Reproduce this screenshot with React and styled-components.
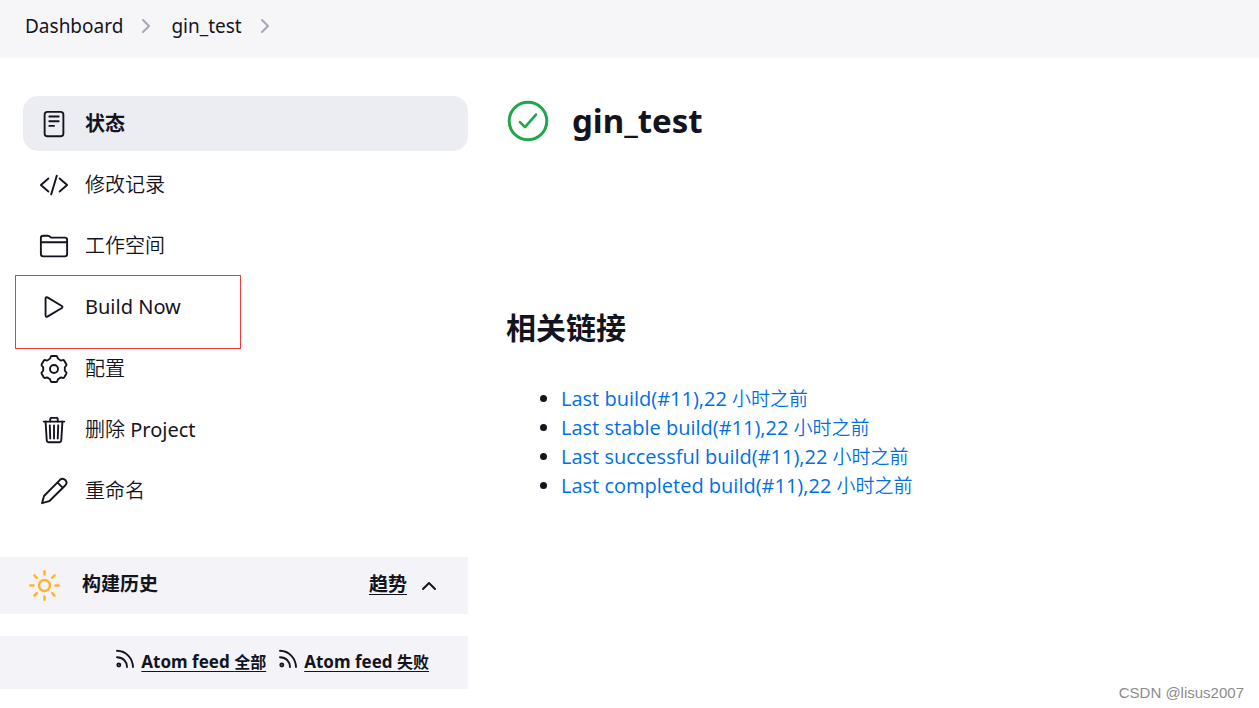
import React from "react";
import styled, { createGlobalStyle } from "styled-components";
import {
  IoReaderOutline,
  IoCodeSlashOutline,
  IoFolderOutline,
  IoPlayOutline,
  IoTrashOutline,
  IoSunnyOutline,
} from "react-icons/io5";

const GlobalStyle = createGlobalStyle`
  *, *::before, *::after { box-sizing: border-box; }
  body {
    margin: 0;
    background: #fff;
    color: #14141f;
    font-family: "Noto Sans", "Noto Sans CJK SC", sans-serif;
    font-size: 19px;
  }
  a { color: inherit; text-decoration: none; }
  h1, h2, ul, ol, p { margin: 0; padding: 0; }
`;

const Page = styled.div`
  position: relative;
  min-height: 100vh;
`;

const Breadcrumbs = styled.nav`
  background: #f6f6f9;
  height: 58px;
  padding: 0 25px 6px;
`;

const CrumbList = styled.ol`
  display: flex;
  align-items: center;
  height: 100%;
  list-style: none;
`;

const Crumb = styled.li`
  display: flex;
  align-items: center;
  gap: 17px;
  margin-right: 19px;
  line-height: 24px;

  svg { color: #a6a6bb; }
`;

const Columns = styled.div`
  display: grid;
  grid-template-columns: 468px 1fr;
  column-gap: 38px;
  padding-top: 38px;
`;

const Sidebar = styled.aside`
  display: flex;
  flex-direction: column;
`;

const Tasks = styled.nav`
  display: grid;
  grid-auto-rows: 1fr;
  gap: 6px;
  min-height: 423px;
  padding-left: 23px;
`;

const Task = styled.div`
  position: relative;
`;

const TaskLink = styled.a`
  display: flex;
  align-items: center;
  gap: 16px;
  height: 100%;
  padding: 0 16px;
  border-radius: 15px;
  background: ${(p) => (p.$active ? "#ecedf3" : "transparent")};
  font-size: 20px;
  font-weight: ${(p) => (p.$active ? 700 : 350)};
  line-height: 28px;

  svg { width: 30px; height: 30px; flex: none; }
`;

const Latin = styled.span`
  font-weight: 400;
`;

const Highlight = styled.div`
  position: absolute;
  top: -5px;
  left: -8px;
  width: 226px;
  height: 74px;
  border: 1px solid #f23c3c;
  pointer-events: none;
`;

const Pane = styled.section`
  display: flex;
  align-items: center;
  background: #f3f3f8;
  font-weight: 700;
`;

const HistoryPane = styled(Pane)`
  height: 57px;
  margin-top: 38px;
  padding: 0 31px 0 27px;
`;

const SunIcon = styled(IoSunnyOutline)`
  flex: none;
  width: 35px;
  height: 35px;
  color: #ffb32c;

  * { stroke-width: 36px; }
`;

const PaneTitle = styled.h2`
  flex: 1;
  margin-left: 20px;
  padding-bottom: 4px;
  font-size: 19px;
  line-height: 26px;
`;

const Underlined = styled.a`
  text-decoration: underline;
  text-decoration-thickness: 1px;
  text-underline-offset: 3px;
`;

const TrendLink = styled(Underlined)`
  padding-bottom: 4px;
  line-height: 26px;
`;

const Toggle = styled.button`
  display: flex;
  margin-left: 14px;
  padding: 0 0 2px;
  border: 0;
  background: none;
  color: inherit;
`;

const FeedPane = styled(Pane)`
  justify-content: flex-end;
  gap: 12px;
  height: 53px;
  margin-top: 22px;
  padding: 0 39px 4px 0;
  font-size: 17px;
`;

const Feed = styled.span`
  display: flex;
  align-items: center;
  gap: 6px;

  svg { margin-bottom: 3px; }
`;

const FeedKind = styled.span`
  font-size: 16px;
`;

const Main = styled.main`
  padding-top: 3px;
`;

const Headline = styled.div`
  display: flex;
  align-items: center;
  gap: 22px;
`;

const Title = styled.h1`
  font-size: 33px;
  line-height: 42px;
`;

const LinksHeading = styled.h2`
  margin-top: 163px;
  font-size: 30px;
  line-height: 44px;
`;

const Links = styled.ul`
  margin-top: 34px;
  padding-left: 55px;
  font-family: "Open Sans", "Noto Sans CJK SC", sans-serif;
  font-size: 20px;
  line-height: 29px;

  a { color: #006fe6; }
`;

const Cjk = styled.span`
  font-size: 19px;
  font-weight: 350;
  line-height: 1;
`;

const Watermark = styled.footer`
  position: absolute;
  right: 15px;
  bottom: 6px;
  color: #8c8c8c;
  font-family: "Liberation Sans", sans-serif;
  font-size: 15px;
  line-height: 18px;
`;

const Chevron = () => (
  <svg width="12" height="18" viewBox="0 0 12 18" fill="none" stroke="currentColor" strokeWidth="2" strokeLinecap="round" strokeLinejoin="round" aria-hidden="true">
    <path d="M3 3l6 6-6 6" />
  </svg>
);

const polar = (radius, degrees) => {
  const a = (degrees * Math.PI) / 180;
  return `${(15 + radius * Math.cos(a)).toFixed(2)} ${(15 + radius * Math.sin(a)).toFixed(2)}`;
};

const gearPath =
  `M${polar(10.8, 0)}` +
  [30, 90, 150, 210, 270, 330]
    .map(
      (a) =>
        `Q${polar(10.4, a - 20)} ${polar(12.3, a - 16)}` +
        `Q${polar(13.4, a - 14)} ${polar(13.2, a - 9)}` +
        `L${polar(13.2, a + 9)}` +
        `Q${polar(13.4, a + 14)} ${polar(12.3, a + 16)}` +
        `Q${polar(10.4, a + 20)} ${polar(10.8, a + 30)}`
    )
    .join("") +
  "Z";

const GearIcon = () => (
  <svg viewBox="0 0 30 30" fill="none" stroke="currentColor" strokeWidth="1.9" strokeLinejoin="round" aria-hidden="true">
    <path d={gearPath} />
    <circle cx="15" cy="15" r="4" />
  </svg>
);

const PencilIcon = () => (
  <svg viewBox="0 0 30 30" fill="none" stroke="currentColor" strokeWidth="1.9" strokeLinecap="round" strokeLinejoin="round" aria-hidden="true">
    <path d="M3 27.2L5 20 21 3.8C24.6 .8 29.6 5.6 26.4 9.2L10.2 25.2zM18.4 6.4l5.4 5.4" />
  </svg>
);

const RssIcon = () => (
  <svg width="20" height="20" viewBox="0 0 20 20" fill="none" stroke="currentColor" strokeWidth="1.9" strokeLinecap="round" aria-hidden="true">
    <path d="M2 1.8C11 2 17.6 9 18 18M2 8.2C8 8.2 11.8 12.4 12 18" />
    <circle cx="3.8" cy="16" r="1.5" />
  </svg>
);

const SuccessIcon = () => (
  <svg width="44" height="44" viewBox="0 0 44 44" fill="none" stroke="#1ea64b" strokeWidth="3" strokeLinecap="round" strokeLinejoin="round" role="img" aria-label="Success">
    <circle cx="22" cy="22" r="18.8" />
    <path d="M14 23.2l5 5L30 15.6" strokeWidth="2.6" />
  </svg>
);

const tasks = [
  { cjk: "状态", Icon: IoReaderOutline, active: true },
  { cjk: "修改记录", Icon: IoCodeSlashOutline },
  { cjk: "工作空间", Icon: IoFolderOutline },
  { latin: "Build Now", Icon: IoPlayOutline, marked: true },
  { cjk: "配置", Icon: GearIcon },
  { cjk: "删除 ", latin: "Project", Icon: IoTrashOutline },
  { cjk: "重命名", Icon: PencilIcon },
];

const builds = ["Last build(#11),22 ", "Last stable build(#11),22 ", "Last successful build(#11),22 ", "Last completed build(#11),22 "];

export default function App() {
  return (
    <Page>
      <GlobalStyle />
      <Breadcrumbs aria-label="Breadcrumb">
        <CrumbList>
          {["Dashboard", "gin_test"].map((name) => (
            <Crumb key={name}>
              <a href="#">{name}</a>
              <Chevron />
            </Crumb>
          ))}
        </CrumbList>
      </Breadcrumbs>
      <Columns>
        <Sidebar>
          <Tasks aria-label="Tasks">
            {tasks.map(({ cjk, latin, Icon, active, marked }) => (
              <Task key={cjk || latin}>
                <TaskLink href="#" $active={active}>
                  <Icon />
                  <span>
                    {cjk}
                    {latin && <Latin>{latin}</Latin>}
                  </span>
                </TaskLink>
                {marked && <Highlight />}
              </Task>
            ))}
          </Tasks>
          <HistoryPane>
            <SunIcon />
            <PaneTitle>构建历史</PaneTitle>
            <TrendLink href="#">趋势</TrendLink>
            <Toggle type="button" aria-label="Collapse">
              <svg width="16" height="12" viewBox="0 0 16 12" fill="none" stroke="currentColor" strokeWidth="2" strokeLinecap="round" strokeLinejoin="round">
                <path d="M2 10l6-6 6 6" />
              </svg>
            </Toggle>
          </HistoryPane>
          <FeedPane>
            {["全部", "失败"].map((kind) => (
              <Feed key={kind}>
                <RssIcon />
                <Underlined href="#">
                  Atom feed <FeedKind>{kind}</FeedKind>
                </Underlined>
              </Feed>
            ))}
          </FeedPane>
        </Sidebar>
        <Main>
          <Headline>
            <SuccessIcon />
            <Title>gin_test</Title>
          </Headline>
          <LinksHeading>相关链接</LinksHeading>
          <Links>
            {builds.map((label) => (
              <li key={label}>
                <a href="#">
                  {label}
                  <Cjk>小时之前</Cjk>
                </a>
              </li>
            ))}
          </Links>
        </Main>
      </Columns>
      <Watermark>CSDN @lisus2007</Watermark>
    </Page>
  );
}
